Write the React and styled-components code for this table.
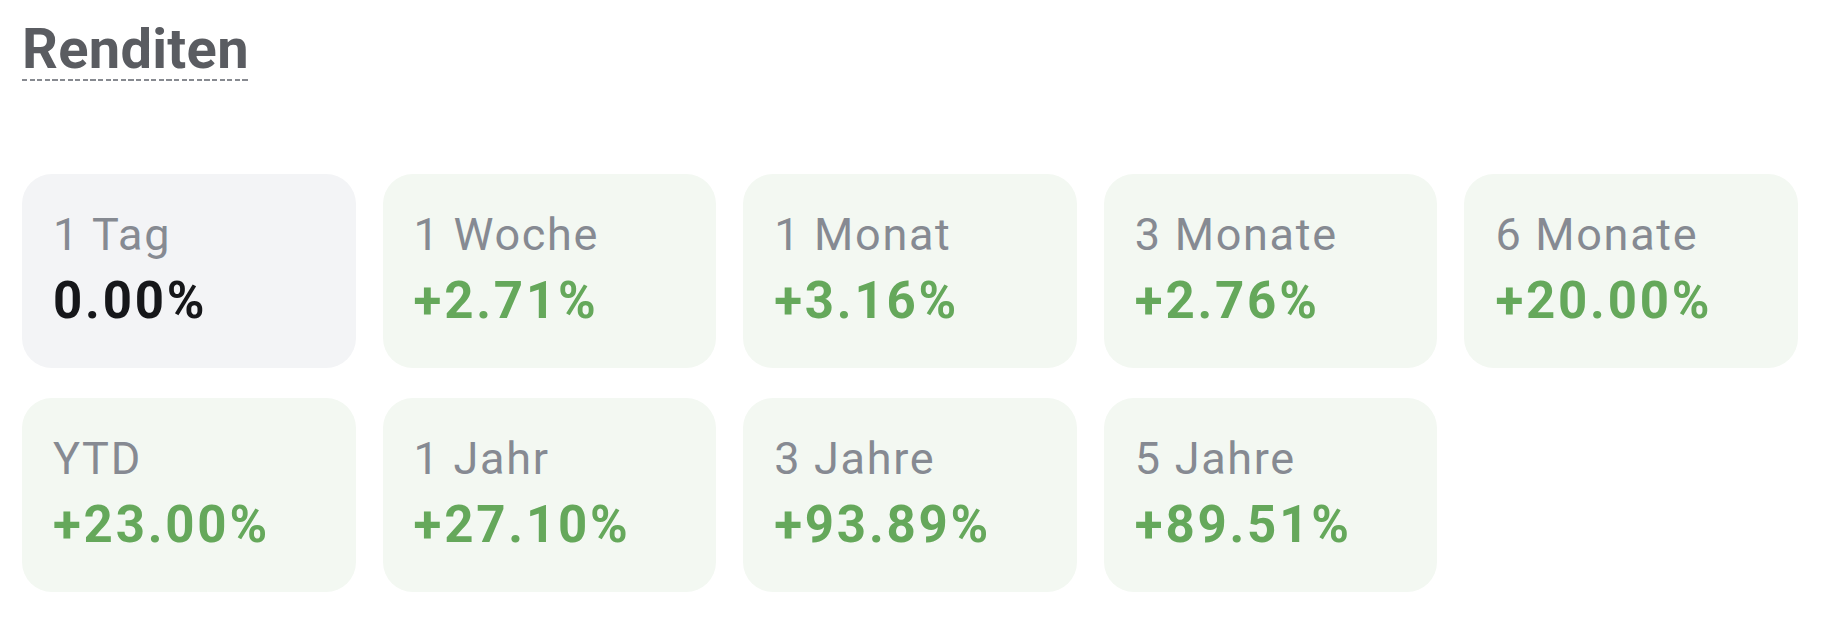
import React from "react"
import styled, { createGlobalStyle } from "styled-components"

const GlobalStyle = createGlobalStyle`
    html, body {
        margin: 0;
        padding: 0;
        background: #ffffff;
        font-family: Roboto, "Noto Sans", "Liberation Sans", sans-serif;
    }
`

const Section = styled.section`
    padding: 17px 27px 0 22px;
`

const Title = styled.h2`
    display: inline-block;
    margin: 0;
    font-size: 56px;
    line-height: 64px;
    font-weight: 700;
    letter-spacing: 0.3px;
    color: #5a5c61;
    padding-bottom: 0;
    background-image: repeating-linear-gradient(
        to right,
        #878a90 0,
        #878a90 5.2px,
        transparent 5.2px,
        transparent 7.6px
    );
    background-size: 100% 2px;
    background-repeat: no-repeat;
    background-position: left bottom;
`

const Grid = styled.div`
    margin-top: 93px;
    display: grid;
    grid-template-columns: repeat(5, 1fr);
    column-gap: 27px;
    row-gap: 30px;
    width: 1776px;
`

const Card = styled.div`
    height: 194px;
    box-sizing: border-box;
    padding: 34px 31px 0;
    border-radius: 30px;
    background: ${p => (p.$tone === "up" ? "#f3f8f2" : "#f3f4f6")};
`

const Label = styled.div`
    font-size: 45px;
    line-height: 54px;
    font-weight: 400;
    letter-spacing: 1.7px;
    color: #868a92;
`

const Value = styled.div`
    margin-top: 8px;
    font-size: 51px;
    line-height: 61px;
    font-weight: 700;
    letter-spacing: 2.8px;
    color: ${p => (p.$tone === "up" ? "#65a85b" : "#16171a")};
`

const returns = [
    { label: "1 Tag", value: 0 },
    { label: "1 Woche", value: 2.71 },
    { label: "1 Monat", value: 3.16 },
    { label: "3 Monate", value: 2.76 },
    { label: "6 Monate", value: 20.0 },
    { label: "YTD", value: 23.0 },
    { label: "1 Jahr", value: 27.1 },
    { label: "3 Jahre", value: 93.89 },
    { label: "5 Jahre", value: 89.51 },
]

function formatReturn(v) {
    const s = v.toFixed(2) + "%"
    return v > 0 ? "+" + s : s
}

function ReturnCard({ label, value }) {
    const tone = value > 0 ? "up" : "flat"
    return (
        <Card $tone={tone}>
            <Label>{label}</Label>
            <Value $tone={tone}>{formatReturn(value)}</Value>
        </Card>
    )
}

export default function App() {
    return (
        <>
            <GlobalStyle />
            <Section>
                <Title>Renditen</Title>
                <Grid>
                    {returns.map(r => (
                        <ReturnCard key={r.label} {...r} />
                    ))}
                </Grid>
            </Section>
        </>
    )
}
